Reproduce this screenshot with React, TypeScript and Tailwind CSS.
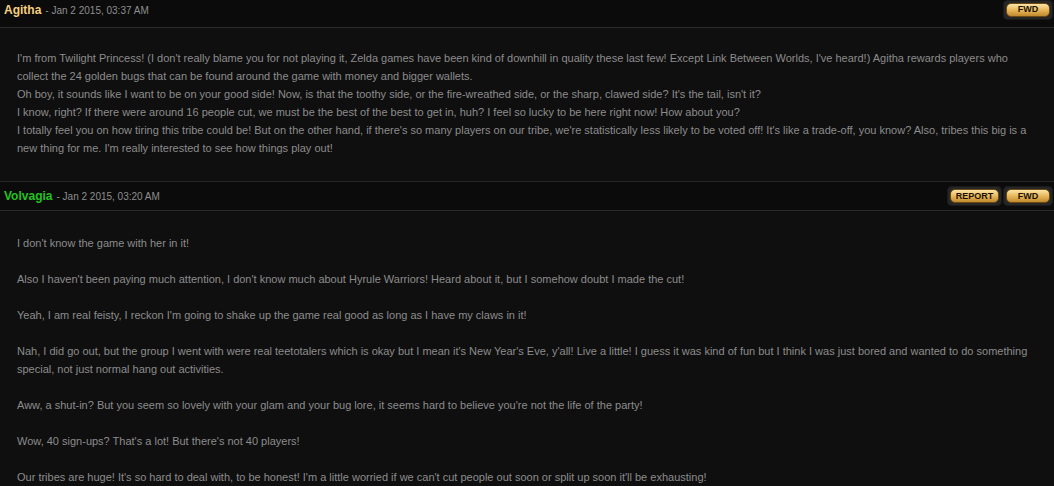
import React from "react";

type Post = {
  name: string;
  nameColor: string;
  date: string;
  report: boolean;
  paragraphs: string[];
  spaced: boolean;
};

const posts: Post[] = [
  {
    name: "Agitha",
    nameColor: "text-[#f6cf80]",
    date: "Jan 2 2015, 03:37 AM",
    report: false,
    spaced: false,
    paragraphs: [
      "I'm from Twilight Princess! (I don't really blame you for not playing it, Zelda games have been kind of downhill in quality these last few! Except Link Between Worlds, I've heard!) Agitha rewards players who collect the 24 golden bugs that can be found around the game with money and bigger wallets.",
      "Oh boy, it sounds like I want to be on your good side! Now, is that the toothy side, or the fire-wreathed side, or the sharp, clawed side? It's the tail, isn't it?",
      "I know, right? If there were around 16 people cut, we must be the best of the best to get in, huh? I feel so lucky to be here right now! How about you?",
      "I totally feel you on how tiring this tribe could be! But on the other hand, if there's so many players on our tribe, we're statistically less likely to be voted off! It's like a trade-off, you know? Also, tribes this big is a new thing for me. I'm really interested to see how things play out!",
    ],
  },
  {
    name: "Volvagia",
    nameColor: "text-[#22c51f]",
    date: "Jan 2 2015, 03:20 AM",
    report: true,
    spaced: true,
    paragraphs: [
      "I don't know the game with her in it!",
      "Also I haven't been paying much attention, I don't know much about Hyrule Warriors! Heard about it, but I somehow doubt I made the cut!",
      "Yeah, I am real feisty, I reckon I'm going to shake up the game real good as long as I have my claws in it!",
      "Nah, I did go out, but the group I went with were real teetotalers which is okay but I mean it's New Year's Eve, y'all! Live a little! I guess it was kind of fun but I think I was just bored and wanted to do something special, not just normal hang out activities.",
      "Aww, a shut-in? But you seem so lovely with your glam and your bug lore, it seems hard to believe you're not the life of the party!",
      "Wow, 40 sign-ups? That's a lot! But there's not 40 players!",
      "Our tribes are huge! It's so hard to deal with, to be honest! I'm a little worried if we can't cut people out soon or split up soon it'll be exhausting!",
    ],
  },
];

function GoldButton({ label, wide }: { label: string; wide?: boolean }) {
  return (
    <div className="rounded-[5px] bg-[#262626] p-[3px] shadow-[inset_0_0_0_1px_#1a1a1a]">
      <button
        className={`h-[14px] ${wide ? "w-[49px]" : "w-[44px]"} rounded-[5px] border border-[#6b4a14] bg-gradient-to-b from-[#fbe4a4] via-[#e8b85a] to-[#c18a2c] text-[9px] font-bold leading-none text-[#1a1206] flex items-center justify-center`}
      >
        {label}
      </button>
    </div>
  );
}

function PostBlock({ post, first }: { post: Post; first: boolean }) {
  return (
    <div>
      <div
        className={`flex items-center justify-between pl-[4px] pr-[1px] bg-[#0b0b0b] border-b border-[#2b2b2b] ${
          first ? "h-[28px] pb-[8px]" : "h-[30px] border-t border-t-[#262626]"
        }`}
      >
        <div className="flex items-baseline gap-[4px]">
          <span className={`text-[12px] font-bold ${post.nameColor}`}>{post.name}</span>
          <span className="text-[10px] text-[#8e8e8e]">- {post.date}</span>
        </div>
        <div className="flex items-center gap-[1px]">
          {post.report && <GoldButton label="REPORT" wide />}
          <GoldButton label="FWD" />
        </div>
      </div>
      <div
        className={`px-[17px] text-[11px] leading-[18px] text-[#8c8c8c] ${
          first ? "pt-[21px] pb-[24px]" : "pt-[23px] pb-[12px]"
        }`}
      >
        {post.paragraphs.map((p, i) => (
          <p key={i} className={post.spaced && i > 0 ? "mt-[18px]" : ""}>
            {p}
          </p>
        ))}
      </div>
    </div>
  );
}

export default function App() {
  return (
    <div className="w-[1054px] h-[486px] overflow-hidden bg-[#0f0f0f] font-['Liberation_Sans',Arial,sans-serif]">
      {posts.map((p, i) => (
        <PostBlock key={p.name} post={p} first={i === 0} />
      ))}
    </div>
  );
}
